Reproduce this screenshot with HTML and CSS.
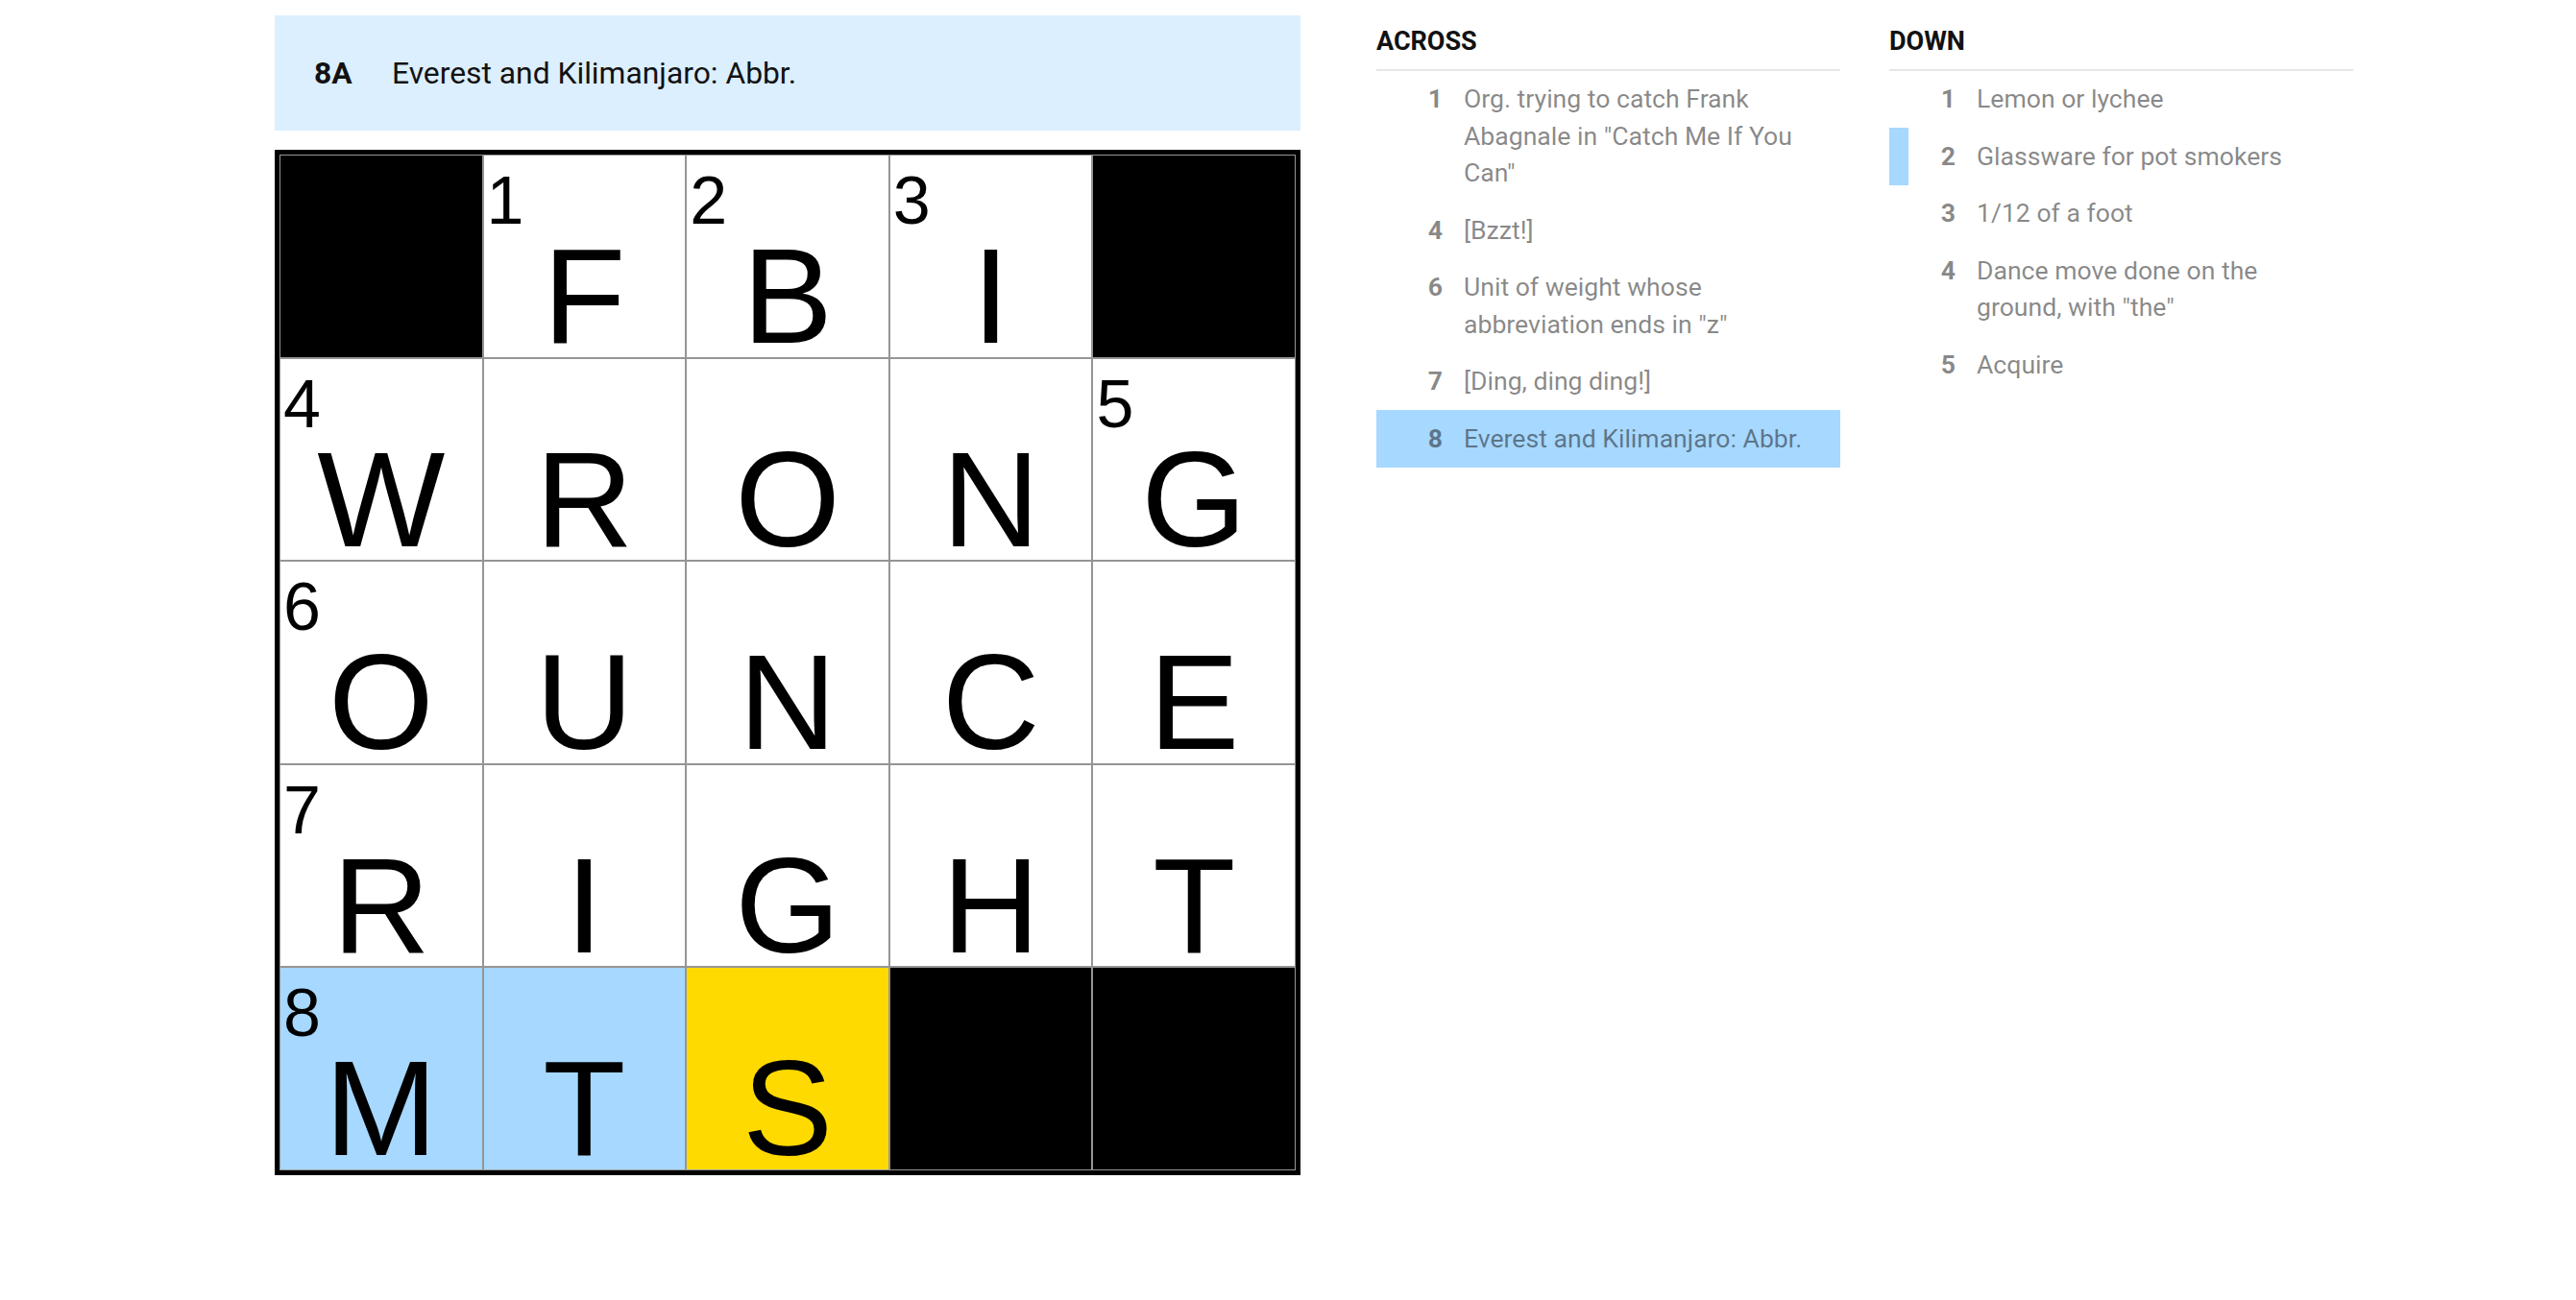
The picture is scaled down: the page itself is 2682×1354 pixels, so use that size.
FILE: index.html
```html
<!DOCTYPE html>
<html lang="en">

<head>
  <meta charset="UTF-8">
  <meta name="viewport" content="width=device-width, initial-scale=1.0">
  <title>The Mini Crossword</title>
  <link rel="stylesheet" href="styles.css">
</head>

<body>
  <div class="puzzle">
    <div class="board-col">
      <div class="clue-bar">
        <span class="clue-label">8A</span>
        <span class="clue-text">Everest and Kilimanjaro: Abbr.</span>
      </div>

      <div class="board">
        <!-- row 1 -->
        <div class="cell block"></div>
        <div class="cell"><span class="num">1</span><span class="letter">F</span></div>
        <div class="cell"><span class="num">2</span><span class="letter">B</span></div>
        <div class="cell"><span class="num">3</span><span class="letter">I</span></div>
        <div class="cell block"></div>
        <!-- row 2 -->
        <div class="cell"><span class="num">4</span><span class="letter">W</span></div>
        <div class="cell"><span class="letter">R</span></div>
        <div class="cell"><span class="letter">O</span></div>
        <div class="cell"><span class="letter">N</span></div>
        <div class="cell"><span class="num">5</span><span class="letter">G</span></div>
        <!-- row 3 -->
        <div class="cell"><span class="num">6</span><span class="letter">O</span></div>
        <div class="cell"><span class="letter">U</span></div>
        <div class="cell"><span class="letter">N</span></div>
        <div class="cell"><span class="letter">C</span></div>
        <div class="cell"><span class="letter">E</span></div>
        <!-- row 4 -->
        <div class="cell"><span class="num">7</span><span class="letter">R</span></div>
        <div class="cell"><span class="letter">I</span></div>
        <div class="cell"><span class="letter">G</span></div>
        <div class="cell"><span class="letter">H</span></div>
        <div class="cell"><span class="letter">T</span></div>
        <!-- row 5 -->
        <div class="cell word"><span class="num">8</span><span class="letter">M</span></div>
        <div class="cell word"><span class="letter">T</span></div>
        <div class="cell active"><span class="letter">S</span></div>
        <div class="cell block"></div>
        <div class="cell block"></div>
      </div>
    </div>

    <div class="clue-lists">
      <section class="clue-list">
        <h3>ACROSS</h3>
        <ol>
          <li><span class="clue-num">1</span><span class="clue-body">Org. trying to catch Frank Abagnale in "Catch Me If You Can"</span></li>
          <li><span class="clue-num">4</span><span class="clue-body">[Bzzt!]</span></li>
          <li><span class="clue-num">6</span><span class="clue-body">Unit of weight whose abbreviation ends in "z"</span></li>
          <li><span class="clue-num">7</span><span class="clue-body">[Ding, ding ding!]</span></li>
          <li class="selected"><span class="clue-num">8</span><span class="clue-body">Everest and Kilimanjaro: Abbr.</span></li>
        </ol>
      </section>

      <section class="clue-list">
        <h3>DOWN</h3>
        <ol>
          <li><span class="clue-num">1</span><span class="clue-body">Lemon or lychee</span></li>
          <li class="crossing"><span class="clue-num">2</span><span class="clue-body">Glassware for pot smokers</span></li>
          <li><span class="clue-num">3</span><span class="clue-body">1/12 of a foot</span></li>
          <li><span class="clue-num">4</span><span class="clue-body">Dance move done on the ground, with "the"</span></li>
          <li><span class="clue-num">5</span><span class="clue-body">Acquire</span></li>
        </ol>
      </section>
    </div>
  </div>
</body>

</html>
```

FILE: styles.css
```css
body {
  margin: 0;
  padding: 0;
  font-family: Roboto, "Liberation Sans", Arial, sans-serif;
  background-color: #fff;
  color: #121212;
}

.puzzle {
  display: flex;
  align-items: flex-start;
  padding: 16px 0 0 286px;
}

/* --- Board column --- */
.board-col {
  width: 1068px;
  display: flex;
  flex-direction: column;
  gap: 20px;
}

.clue-bar {
  height: 120px;
  background: #dcefff;
  display: flex;
  align-items: center;
  padding-left: 41px;
  font-size: 31.8px;
}

.clue-label {
  width: 81px;
  font-weight: 700;
}

.board {
  width: 1068px;
  height: 1068px;
  box-sizing: border-box;
  border: 5px solid #000;
  padding: 1px;
  background: #959595;
  display: grid;
  grid-template-columns: repeat(5, minmax(0, 1fr));
  grid-template-rows: repeat(5, minmax(0, 1fr));
  gap: 2px;
}

.cell {
  position: relative;
  background: #fff;
  font-family: "Liberation Sans", Arial, sans-serif;
  color: #000;
}

.cell.block {
  background: #000;
}

.cell.word {
  background: #a7d8ff;
}

.cell.active {
  background: #ffda00;
}

/* clue number sits in the corner over the cell */
.num {
  position: absolute;
  top: 12px;
  left: 3px;
  font-size: 70px;
  line-height: 1;
}

.letter {
  display: block;
  margin-top: 86px;
  font-size: 141px;
  line-height: 120px;
  text-align: center;
}

/* --- Clue lists --- */
.clue-lists {
  display: flex;
  gap: 51px;
  margin-left: 79px;
  margin-top: 11px;
}

.clue-list {
  width: 483px;
}

.clue-list h3 {
  margin: 0;
  font-size: 27px;
  font-weight: 700;
  line-height: 32px;
  padding-bottom: 12.5px;
  border-bottom: 2px solid #e6e6e6;
}

.clue-list ol {
  list-style: none;
  margin: 0;
  padding: 0;
}

.clue-list li {
  display: flex;
  padding: 10.5px 20px 10.5px 0;
  border-left: 20px solid transparent;
  font-size: 26.6px;
  line-height: 38.5px;
  color: rgba(18, 18, 18, 0.5);
}

.clue-num {
  width: 49px;
  flex-shrink: 0;
  text-align: right;
  font-weight: 700;
}

.clue-body {
  margin-left: 22px;
}

.clue-list li.selected {
  background: #a7d8ff;
}

.clue-list li.crossing {
  border-left-color: #a7d8ff;
}
```
